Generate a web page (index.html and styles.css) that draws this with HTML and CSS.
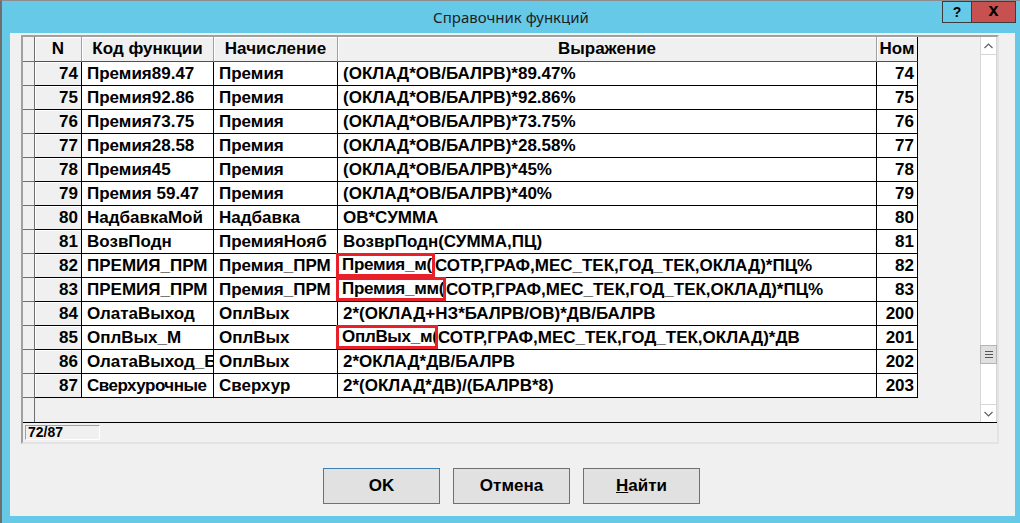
FILE: index.html
```html
<!DOCTYPE html>
<html lang="ru">

<head>
    <meta charset="UTF-8">
    <title>Справочник функций</title>
    <link rel="stylesheet" href="styles.css">
</head>

<body>
    <div class="window">
        <div class="titlebar">
            <div></div>
            <div class="title">Справочник функций</div>
            <div class="caption">
                <div class="cap-btn help">?</div>
                <div class="cap-btn close">x</div>
            </div>
        </div>

        <div class="client">
            <div class="grid-frame">
                <div class="grid-body">
                    <div class="table">
                        <div class="row head">
                            <div class="ind"></div>
                            <div class="cell">N</div>
                            <div class="cell">Код функции</div>
                            <div class="cell">Начисление</div>
                            <div class="cell">Выражение</div>
                            <div class="cell">Ном</div>
                        </div>
                        <div class="row"><div class="ind"></div><div class="cell num">74</div><div class="cell">Премия89.47</div><div class="cell">Премия</div><div class="cell">(ОКЛАД*ОВ/БАЛРВ)*89.47%</div><div class="cell nom">74</div></div>
                        <div class="row"><div class="ind"></div><div class="cell num">75</div><div class="cell">Премия92.86</div><div class="cell">Премия</div><div class="cell">(ОКЛАД*ОВ/БАЛРВ)*92.86%</div><div class="cell nom">75</div></div>
                        <div class="row"><div class="ind"></div><div class="cell num">76</div><div class="cell">Премия73.75</div><div class="cell">Премия</div><div class="cell">(ОКЛАД*ОВ/БАЛРВ)*73.75%</div><div class="cell nom">76</div></div>
                        <div class="row"><div class="ind"></div><div class="cell num">77</div><div class="cell">Премия28.58</div><div class="cell">Премия</div><div class="cell">(ОКЛАД*ОВ/БАЛРВ)*28.58%</div><div class="cell nom">77</div></div>
                        <div class="row"><div class="ind"></div><div class="cell num">78</div><div class="cell">Премия45</div><div class="cell">Премия</div><div class="cell">(ОКЛАД*ОВ/БАЛРВ)*45%</div><div class="cell nom">78</div></div>
                        <div class="row"><div class="ind"></div><div class="cell num">79</div><div class="cell">Премия 59.47</div><div class="cell">Премия</div><div class="cell">(ОКЛАД*ОВ/БАЛРВ)*40%</div><div class="cell nom">79</div></div>
                        <div class="row"><div class="ind"></div><div class="cell num">80</div><div class="cell">НадбавкаМой</div><div class="cell">Надбавка</div><div class="cell">ОВ*СУММА</div><div class="cell nom">80</div></div>
                        <div class="row"><div class="ind"></div><div class="cell num">81</div><div class="cell">ВозвПодн</div><div class="cell">ПремияНояб</div><div class="cell">ВозврПодн(СУММА,ПЦ)</div><div class="cell nom">81</div></div>
                        <div class="row"><div class="ind"></div><div class="cell num">82</div><div class="cell">ПРЕМИЯ_ПРМ</div><div class="cell">Премия_ПРМ</div><div class="cell"><span class="mark mark-a">Премия_м(</span>СОТР,ГРАФ,МЕС_ТЕК,ГОД_ТЕК,ОКЛАД)*ПЦ%</div><div class="cell nom">82</div></div>
                        <div class="row"><div class="ind"></div><div class="cell num">83</div><div class="cell">ПРЕМИЯ_ПРМ</div><div class="cell">Премия_ПРМ</div><div class="cell"><span class="mark mark-b">Премия_мм(</span>СОТР,ГРАФ,МЕС_ТЕК,ГОД_ТЕК,ОКЛАД)*ПЦ%</div><div class="cell nom">83</div></div>
                        <div class="row"><div class="ind"></div><div class="cell num">84</div><div class="cell">ОлатаВыход</div><div class="cell">ОплВых</div><div class="cell">2*(ОКЛАД+НЗ*БАЛРВ/ОВ)*ДВ/БАЛРВ</div><div class="cell nom">200</div></div>
                        <div class="row"><div class="ind"></div><div class="cell num">85</div><div class="cell">ОплВых_М</div><div class="cell">ОплВых</div><div class="cell"><span class="mark mark-c">ОплВых_м(</span>СОТР,ГРАФ,МЕС_ТЕК,ГОД_ТЕК,ОКЛАД)*ДВ</div><div class="cell nom">201</div></div>
                        <div class="row"><div class="ind"></div><div class="cell num">86</div><div class="cell">ОлатаВыход_Б</div><div class="cell">ОплВых</div><div class="cell">2*ОКЛАД*ДВ/БАЛРВ</div><div class="cell nom">202</div></div>
                        <div class="row"><div class="ind"></div><div class="cell num">87</div><div class="cell tight">Сверхурочные</div><div class="cell">Сверхур</div><div class="cell">2*(ОКЛАД*ДВ)/(БАЛРВ*8)</div><div class="cell nom">203</div></div>
                        <div class="filler"><div class="ind"></div></div>
                    </div>

                    <div class="scrollbar">
                        <div class="sb-arrow up">
                            <svg width="9" height="6" viewBox="0 0 9 6"><path d="M0.5 5 L4.5 1 L8.5 5" fill="none" stroke="#606060" stroke-width="1.2"/></svg>
                        </div>
                        <div class="sb-track">
                            <div class="sb-thumb">
                                <svg width="8" height="7" viewBox="0 0 8 7"><path d="M0 0.5H8M0 3.5H8M0 6.5H8" stroke="#555" stroke-width="1"/></svg>
                            </div>
                        </div>
                        <div class="sb-arrow down">
                            <svg width="9" height="6" viewBox="0 0 9 6"><path d="M0.5 1 L4.5 5 L8.5 1" fill="none" stroke="#606060" stroke-width="1.2"/></svg>
                        </div>
                    </div>
                </div>
                <div class="status">
                    <div class="status-count">72/87</div>
                </div>
            </div>

            <div class="buttons">
                <button class="btn default">OK</button>
                <button class="btn">Отмена</button>
                <button class="btn"><u>Н</u>айти</button>
            </div>
        </div>
    </div>
</body>

</html>
```

FILE: styles.css
```css
body {
    margin: 0;
    background-color: #66c9e8;
    font-family: "Liberation Sans", Arial, sans-serif;
    color: #000;
}

.window {
    width: 1020px;
    height: 523px;
    box-sizing: border-box;
    border-top: 1px solid #8c8c8c;
    border-left: 2px solid #6f6f6f;
    display: flex;
    flex-direction: column;
}

/* title bar */
.titlebar {
    height: 32px;
    display: grid;
    grid-template-columns: 1fr auto 1fr;
}

.title {
    font-family: "Noto Sans", "Open Sans", sans-serif;
    font-size: 15px;
    line-height: 32px;
    color: #1e1e1e;
}

.caption {
    justify-self: end;
    align-self: start;
    display: flex;
    margin-right: 4px;
}

.cap-btn {
    height: 22px;
    box-sizing: border-box;
    border: 1px solid #3c3c3c;
    text-align: center;
    font-weight: bold;
    font-size: 14px;
    line-height: 20px;
}

.help {
    width: 29px;
    border-right: none;
}

.close {
    width: 45px;
    background-color: #c75050;
    font-size: 18px;
    line-height: 17px;
}

/* client area */
.client {
    flex: 1;
    margin: 0 5px 7px 8px;
    padding: 2px 16px 0 11px;
    background-color: #f0f0f0;
}

.grid-frame {
    height: 409px;
    box-sizing: border-box;
    border: 2px solid;
    border-color: #a0a0a0 #e3e3e3 #e3e3e3 #a0a0a0;
    display: flex;
    flex-direction: column;
}

.grid-body {
    height: 385px;
    display: flex;
}

.table {
    flex: 1;
    display: flex;
    flex-direction: column;
    font-weight: bold;
    font-size: 17px;
}

.row {
    display: grid;
    grid-template-columns: 12px 47px 132px 124px 539px 41px;
    height: 24px;
}

.row .cell,
.row .ind {
    box-sizing: border-box;
    border-right: 1px solid #000;
    border-bottom: 1px solid #000;
    background-color: #fff;
    padding: 0 5px;
    line-height: 23px;
    white-space: nowrap;
    overflow: hidden;
}

.row .ind {
    background-color: #f0f0f0;
    border-right-color: #6e6e6e;
    border-bottom-color: #6e6e6e;
    padding: 0;
}

.row .num {
    background-color: #f0f0f0;
    text-align: right;
    padding-right: 3px;
    box-shadow: inset 1px 1px #fff;
}

.row .nom {
    text-align: right;
    padding-right: 3px;
}

.row .tight {
    letter-spacing: -0.5px;
}

.head {
    height: 25px;
}

.head .cell {
    background-color: #f0f0f0;
    text-align: center;
    line-height: 24px;
    border-right-color: #a0a0a0;
    border-bottom-color: #505050;
    box-shadow: inset 1px 1px #fff;
    padding: 0;
}

.head .cell:last-child {
    border-right-color: #000;
    overflow: visible;
}

.row .cell:nth-child(5) {
    overflow: visible;
}

.mark {
    display: inline-block;
    vertical-align: top;
    box-sizing: border-box;
    height: 24px;
    margin: -1px 0 0 -7px;
    padding-left: 3px;
    border: 3px solid #e8202a;
    line-height: 18px;
    letter-spacing: -0.3px;
    overflow: hidden;
    background-color: #fff;
}

.mark-a {
    width: 99px;
}

.mark-b {
    width: 110px;
}

.mark-c {
    width: 102px;
}

.filler {
    flex: 1;
    display: flex;
}

.filler .ind {
    width: 12px;
    box-sizing: border-box;
    border-right: 1px solid #6e6e6e;
    background-color: #f0f0f0;
}

/* scrollbar */
.scrollbar {
    width: 17px;
    display: flex;
    flex-direction: column;
    background-color: #fff;
    border-left: 1px solid #d6d6d6;
    border-right: 1px solid #d6d6d6;
    box-sizing: border-box;
}

.sb-arrow {
    height: 17px;
    display: flex;
    align-items: center;
    justify-content: center;
}

.sb-arrow.up {
    border-bottom: 1px solid #d6d6d6;
}

.sb-arrow.down {
    border-top: 1px solid #d6d6d6;
}

.sb-track {
    flex: 1;
    padding-top: 290px;
}

.sb-thumb {
    height: 19px;
    box-sizing: border-box;
    margin: 0 -1px;
    border: 1px solid #b4b4b4;
    background-color: #e0e0e0;
    display: flex;
    align-items: center;
    justify-content: center;
}

/* status line */
.status {
    flex: 1;
    border-top: 1px solid #000;
    padding: 2px 0 0 2px;
}

.status-count {
    width: 75px;
    height: 15px;
    box-sizing: border-box;
    border: 1px solid;
    border-color: #a0a0a0 #fff #fff #a0a0a0;
    font-size: 14px;
    font-weight: bold;
    line-height: 13px;
    padding-left: 2px;
}

/* buttons */
.buttons {
    display: flex;
    justify-content: center;
    gap: 13px;
    margin-top: 24px;
    padding-left: 3px;
}

.btn {
    width: 117px;
    height: 36px;
    border: 1px solid #707070;
    background-color: #e1e1e1;
    font-family: "Liberation Sans", Arial, sans-serif;
    font-weight: bold;
    font-size: 17px;
    color: #000;
    padding: 0;
}

.btn.default {
    border-color: #3c7fb1;
}
```
